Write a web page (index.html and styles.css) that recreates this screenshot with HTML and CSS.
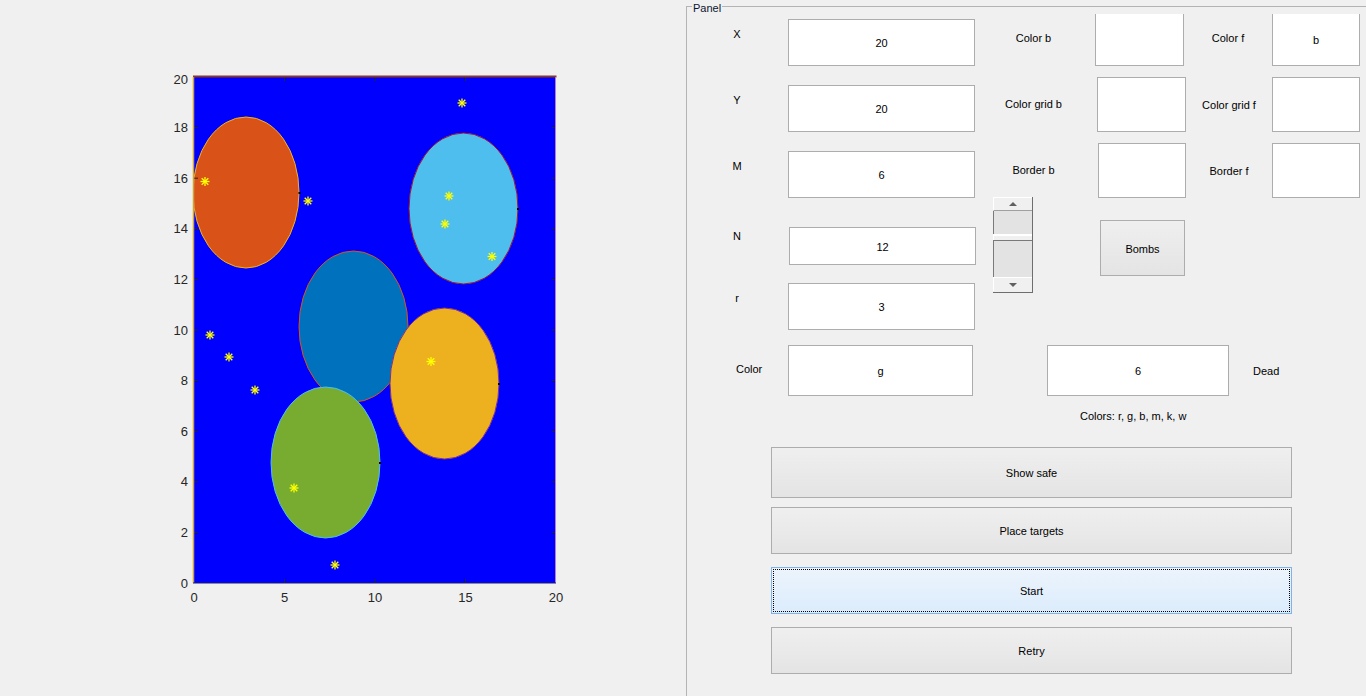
FILE: index.html
```html
<!DOCTYPE html>
<html lang="en">
<head>
<meta charset="utf-8">
<title>Bombs</title>
<link rel="stylesheet" href="styles.css">
</head>
<body>
<div class="app">
  <div class="figure">
    <svg class="plot" width="686" height="696" viewBox="0 0 686 696">
      <defs>
        <clipPath id="axclip"><rect x="193" y="77" width="363" height="506"/></clipPath>
        <g id="star">
          <line x1="0" y1="-4.5" x2="0" y2="4.5"/>
          <line x1="-4.5" y1="0" x2="4.5" y2="0"/>
          <line x1="-3.3" y1="-3.3" x2="3.3" y2="3.3"/>
          <line x1="-3.3" y1="3.3" x2="3.3" y2="-3.3"/>
        </g>
      </defs>
      <rect class="axbg" x="194" y="77" width="362" height="506"/>
      <g clip-path="url(#axclip)" class="blobs">
        <ellipse cx="246" cy="192.5" rx="53" ry="75.5" fill="#d95319" stroke="#edb120"/>
        <ellipse cx="463.5" cy="208.5" rx="54.5" ry="75.5" fill="#4dbeee" stroke="#a2142f"/>
        <ellipse cx="353.5" cy="326.5" rx="54.5" ry="75.5" fill="#0072bd" stroke="#d95319"/>
        <ellipse cx="325.5" cy="462.5" rx="54.5" ry="75.5" fill="#77ac30" stroke="#4dbeee"/>
        <ellipse cx="444.5" cy="383.5" rx="54.5" ry="75.5" fill="#edb120" stroke="#7e2f8e"/>
        <rect x="298.5" y="192" width="2" height="2" fill="#000"/>
        <rect x="517" y="208" width="2" height="2" fill="#000"/>
        <rect x="379" y="462" width="2" height="2" fill="#000"/>
        <rect x="498" y="383" width="2" height="2" fill="#000"/>
      </g>
      <g class="stars">
        <use href="#star" x="462" y="103"/>
        <use href="#star" x="205" y="181.5"/>
        <use href="#star" x="308" y="201"/>
        <use href="#star" x="449" y="196"/>
        <use href="#star" x="445" y="224"/>
        <use href="#star" x="492" y="256.5"/>
        <use href="#star" x="210" y="335"/>
        <use href="#star" x="229" y="357"/>
        <use href="#star" x="255" y="390"/>
        <use href="#star" x="431" y="361.5"/>
        <use href="#star" x="294" y="488"/>
        <use href="#star" x="335" y="565"/>
      </g>
      <g class="ticks">
        <line x1="194" y1="532.4" x2="198" y2="532.4"/>
        <line x1="194" y1="481.8" x2="198" y2="481.8"/>
        <line x1="194" y1="431.2" x2="198" y2="431.2"/>
        <line x1="194" y1="380.6" x2="198" y2="380.6"/>
        <line x1="194" y1="330" x2="198" y2="330"/>
        <line x1="194" y1="279.4" x2="198" y2="279.4"/>
        <line x1="194" y1="228.8" x2="198" y2="228.8"/>
        <line x1="194" y1="178.2" x2="198" y2="178.2"/>
        <line x1="194" y1="127.6" x2="198" y2="127.6"/>
        <line x1="552" y1="532.4" x2="556" y2="532.4"/>
        <line x1="552" y1="481.8" x2="556" y2="481.8"/>
        <line x1="552" y1="431.2" x2="556" y2="431.2"/>
        <line x1="552" y1="380.6" x2="556" y2="380.6"/>
        <line x1="552" y1="330" x2="556" y2="330"/>
        <line x1="552" y1="279.4" x2="556" y2="279.4"/>
        <line x1="552" y1="228.8" x2="556" y2="228.8"/>
        <line x1="552" y1="178.2" x2="556" y2="178.2"/>
        <line x1="552" y1="127.6" x2="556" y2="127.6"/>
        <line x1="284.5" y1="583" x2="284.5" y2="579"/>
        <line x1="375" y1="583" x2="375" y2="579"/>
        <line x1="465.5" y1="583" x2="465.5" y2="579"/>
        <line x1="284.5" y1="77" x2="284.5" y2="81"/>
        <line x1="375" y1="77" x2="375" y2="81"/>
        <line x1="465.5" y1="77" x2="465.5" y2="81"/>
      </g>
      <line class="edge-top" x1="193" y1="76.5" x2="556.5" y2="76.5"/>
      <line class="edge-left" x1="193.5" y1="77" x2="193.5" y2="583"/>
      <line class="edge-right" x1="555.5" y1="77" x2="555.5" y2="583"/>
      <line class="edge-bottom" x1="193" y1="583" x2="556" y2="583"/>
      <g class="ylabels">
        <text x="188" y="587.5">0</text>
        <text x="188" y="536.9">2</text>
        <text x="188" y="486.3">4</text>
        <text x="188" y="435.7">6</text>
        <text x="188" y="385.1">8</text>
        <text x="188" y="334.5">10</text>
        <text x="188" y="283.9">12</text>
        <text x="188" y="233.3">14</text>
        <text x="188" y="182.7">16</text>
        <text x="188" y="132.1">18</text>
        <text x="188" y="84">20</text>
      </g>
      <g class="xlabels">
        <text x="194" y="602">0</text>
        <text x="284.5" y="602">5</text>
        <text x="375" y="602">10</text>
        <text x="465.5" y="602">15</text>
        <text x="556" y="602">20</text>
      </g>
    </svg>
  </div>

  <div class="panel">
    <span class="panel-title">Panel</span>

    <div class="row r1">
      <div class="lbl lbl-l mt13">X</div>
      <div class="edit e-main mt5 h47">20</div>
      <div class="lbl lbl-m mt17">Color b</div>
      <div class="box ml3 w89 h52 notop"></div>
      <div class="lbl w88 mt17">Color f</div>
      <div class="box w88 h52 notop">b</div>
    </div>

    <div class="row r2">
      <div class="lbl lbl-l mt16">Y</div>
      <div class="edit e-main mt8 h47">20</div>
      <div class="lbl lbl-m mt20">Color grid b</div>
      <div class="box ml5 w89 h55"></div>
      <div class="lbl w86 mt21">Color grid f</div>
      <div class="box w88 h55"></div>
    </div>

    <div class="row r3">
      <div class="lbl lbl-l mt16">M</div>
      <div class="edit e-main mt8 h47">6</div>
      <div class="lbl lbl-m mt20">Border b</div>
      <div class="box ml6 w88 h55"></div>
      <div class="lbl w86 mt21">Border f</div>
      <div class="box w88 h55"></div>
    </div>

    <div class="row r4">
      <div class="col-left">
        <div class="sub sub-n">
          <div class="lbl lbl-l mt2">N</div>
          <div class="edit e-n">12</div>
        </div>
        <div class="sub sub-r">
          <div class="lbl lbl-l mt8">r</div>
          <div class="edit e-main h47">3</div>
        </div>
      </div>
      <div class="slider">
        <div class="sl-arrow sl-up"></div>
        <div class="sl-track sl-track-a"></div>
        <div class="sl-thumb"></div>
        <div class="sl-track sl-track-b"></div>
        <div class="sl-arrow sl-down"></div>
      </div>
      <div class="btn btn-bombs">Bombs</div>
    </div>

    <div class="row r5">
      <div class="lbl lbl-color mt17">Color</div>
      <div class="edit e-color">g</div>
      <div class="edit e-dead">6</div>
      <div class="lbl lbl-dead mt19">Dead</div>
    </div>

    <div class="hint">Colors: r, g, b, m, k, w</div>

    <div class="btns">
      <div class="btn btn-wide b-show">Show safe</div>
      <div class="btn btn-wide b-place">Place targets</div>
      <div class="btn btn-wide btn-focus b-start">Start</div>
      <div class="btn btn-wide b-retry">Retry</div>
    </div>
  </div>
</div>
</body>
</html>
```

FILE: styles.css
```css
html, body {
  margin: 0;
  padding: 0;
  height: 100%;
  overflow: hidden;
  background: #f0f0f0;
  font-family: "Liberation Sans", Arial, sans-serif;
  font-size: 11px;
  color: #000;
}

.app {
  display: flex;
  width: 1366px;
  height: 696px;
}

.figure {
  width: 686px;
  flex: none;
}

.plot {
  display: block;
}

.axbg { fill: #0000ff; }
.blobs ellipse { stroke-width: 1; }
.stars { stroke: #ffff00; stroke-width: 1.3; }
.ticks line { stroke: #262626; stroke-width: 1; }
.edge-top { stroke: #86392a; stroke-width: 2; }
.edge-left { stroke: #cfa23a; stroke-width: 1.5; }
.edge-right { stroke: #b27ec4; stroke-width: 1; }
.edge-bottom { stroke: #1c1c70; stroke-width: 1; }

.ylabels text, .xlabels text {
  font-family: "Liberation Sans", Arial, sans-serif;
  font-size: 13px;
  fill: #262626;
}
.ylabels text { text-anchor: end; }
.xlabels text { text-anchor: middle; }

/* ---------- panel ---------- */
.panel {
  position: relative;
  flex: none;
  width: 700px;
  height: 720px;
  margin-top: 6px;
  box-sizing: border-box;
  border-top: 1px solid #b4b4b4;
  border-left: 1px solid #b4b4b4;
}

.panel-title {
  position: absolute;
  top: -6px;
  left: 5px;
  padding: 1px 1px 0;
  line-height: 13px;
  background: #f0f0f0;
  color: #0b1530;
}

.row {
  display: flex;
  align-items: flex-start;
}

.r1 { margin-top: 7px; height: 51px; }
.r2 { margin-top: 12px; height: 54px; }
.r3 { margin-top: 12px; height: 54px; }
.r4 { height: 132px; }
.r5 { margin-top: 16px; height: 50px; }

.lbl {
  flex: none;
  padding-top: 1px;
  line-height: 13px;
  text-align: center;
  white-space: nowrap;
}
.lbl-l { margin-left: 25px; width: 50px; }
.lbl-m { width: 117px; }

.edit, .box {
  flex: none;
  box-sizing: border-box;
  padding-top: 1px;
  background: #fff;
  border: 1px solid #adadad;
  display: flex;
  align-items: center;
  justify-content: center;
}

.e-main { margin-left: 26px; width: 187px; }
.notop { border-top: none; }

.mt2 { margin-top: 2px; }
.mt5 { margin-top: 5px; }
.mt8 { margin-top: 8px; }
.mt13 { margin-top: 13px; }
.mt16 { margin-top: 16px; }
.mt17 { margin-top: 17px; }
.mt19 { margin-top: 19px; }
.mt20 { margin-top: 20px; }
.mt21 { margin-top: 21px; }
.ml3 { margin-left: 3px; }
.ml5 { margin-left: 5px; }
.ml6 { margin-left: 6px; }
.w86 { width: 86px; }
.w88 { width: 88px; }
.w89 { width: 89px; }
.h47 { height: 47px; }
.h52 { height: 52px; }
.h55 { height: 55px; }

/* row 4 */
.col-left {
  flex: none;
  width: 289px;
  display: flex;
  flex-direction: column;
}
.sub { display: flex; align-items: flex-start; }
.sub-n { margin-top: 30px; height: 38px; }
.sub-r { margin-top: 18px; height: 47px; }
.e-n { margin-left: 27px; width: 187px; height: 38px; }

.slider {
  flex: none;
  margin-left: 17px;
  width: 40px;
  height: 96px;
  box-sizing: border-box;
  border-right: 1px solid #6e6e6e;
  border-bottom: 1px solid #6e6e6e;
  display: flex;
  flex-direction: column;
}
.sl-arrow {
  flex: none;
  height: 14px;
  box-sizing: border-box;
  background: #f0f0f0;
  border-top: 1px solid #fff;
  border-left: 1px solid #fff;
  display: flex;
  align-items: center;
  justify-content: center;
}
.sl-up { border-bottom: 1px solid #a0a0a0; }
.sl-up::after {
  content: "";
  border-left: 4px solid transparent;
  border-right: 4px solid transparent;
  border-bottom: 4px solid #606060;
}
.sl-down::after {
  content: "";
  border-left: 4px solid transparent;
  border-right: 4px solid transparent;
  border-top: 4px solid #606060;
}
.sl-track {
  flex: none;
  box-sizing: border-box;
  background: #e3e3e3;
  border-left: 1px solid #7a7a7a;
}
.sl-track-a { height: 23px; }
.sl-track-b { height: 37px; border-top: 1px solid #7a7a7a; }
.sl-thumb {
  flex: none;
  height: 6px;
  box-sizing: border-box;
  background: #f0f0f0;
  border-top: 2px solid #fff;
  border-left: 1px solid #fff;
}

/* buttons */
.btn {
  flex: none;
  box-sizing: border-box;
  padding-top: 1px;
  border: 1px solid #adadad;
  background: linear-gradient(#efefef, #e4e4e4);
  display: flex;
  align-items: center;
  justify-content: center;
  color: #000;
}
.btn-bombs {
  margin-left: 67px;
  margin-top: 23px;
  width: 85px;
  height: 56px;
}

/* row 5 */
.lbl-color { margin-left: 49px; width: 52px; text-align: left; }
.e-color { width: 185px; height: 51px; }
.e-dead { margin-left: 74px; width: 182px; height: 51px; }
.lbl-dead { margin-left: 24px; text-align: left; }

.hint {
  margin-top: 14px;
  margin-left: 393px;
  padding-top: 1px;
  line-height: 13px;
  white-space: nowrap;
}

.btns {
  display: flex;
  flex-direction: column;
  margin-left: 84px;
  width: 521px;
}
.btn-wide { width: 521px; }
.b-show { margin-top: 24px; height: 51px; }
.b-place { margin-top: 9px; height: 47px; }
.b-start { margin-top: 13px; height: 47px; }
.b-retry { margin-top: 13px; height: 47px; }

.btn-focus {
  border-color: #7eb4ea;
  background: linear-gradient(#ecf4fc, #dcecfc);
  outline: 1px dotted #000;
  outline-offset: -3px;
}
```
